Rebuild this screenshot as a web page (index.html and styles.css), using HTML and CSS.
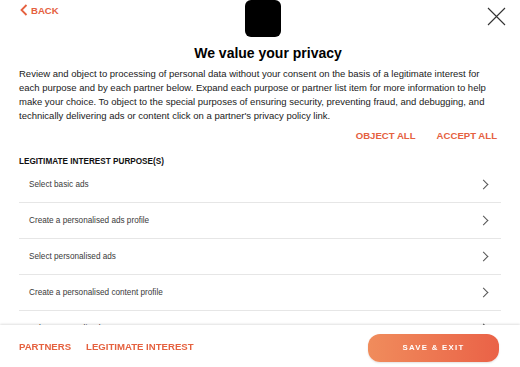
FILE: index.html
```html
<!DOCTYPE html>
<html lang="en">
<head>
    <meta charset="UTF-8">
    <title>Privacy - Legitimate Interest</title>
    <link rel="stylesheet" href="styles.css">
</head>
<body>
    <header class="header">
        <a class="back-link" href="#">
            <svg width="8" height="12" viewBox="0 0 8 12"><path d="M6.5 1 L1.5 6 L6.5 11" fill="none" stroke="#e5613f" stroke-width="1.8"/></svg>
            BACK
        </a>
        <div class="logo"></div>
        <button class="close-button" aria-label="Close">
            <svg width="19" height="19" viewBox="0 0 19 19"><path d="M1 1 L18 18 M18 1 L1 18" stroke="#333" stroke-width="1.1"/></svg>
        </button>
    </header>

    <h1 class="title">We value your privacy</h1>
    <p class="intro">Review and object to processing of personal data without your consent on the basis of a legitimate interest for each purpose and by each partner below. Expand each purpose or partner list item for more information to help make your choice. To object to the special purposes of ensuring security, preventing fraud, and debugging, and technically delivering ads or content click on a partner's privacy policy link.</p>

    <div class="bulk-actions">
        <a class="text-link" href="#">OBJECT ALL</a>
        <a class="text-link" href="#">ACCEPT ALL</a>
    </div>

    <h2 class="section-label">LEGITIMATE INTEREST PURPOSE(S)</h2>
    <ul class="purpose-list">
        <li class="purpose-item">Select basic ads <span class="chevron"></span></li>
        <li class="purpose-item">Create a personalised ads profile <span class="chevron"></span></li>
        <li class="purpose-item">Select personalised ads <span class="chevron"></span></li>
        <li class="purpose-item">Create a personalised content profile <span class="chevron"></span></li>
        <li class="purpose-item">Select personalised content <span class="chevron"></span></li>
    </ul>

    <footer class="footer">
        <div class="footer-links">
            <a class="text-link" href="#">PARTNERS</a>
            <a class="text-link" href="#">LEGITIMATE INTEREST</a>
        </div>
        <button class="save-button">SAVE &amp; EXIT</button>
    </footer>
</body>
</html>
```

FILE: styles.css
```css
body {
    font-family: "Liberation Sans", Arial, sans-serif;
    margin: 0;
    padding: 0 19px;
    background-color: #fff;
    color: #111;
    height: 367px;
    overflow: hidden;
}

.header {
    display: grid;
    grid-template-columns: 1fr auto 1fr;
    align-items: start;
    height: 37px;
}

.back-link {
    display: flex;
    align-items: center;
    gap: 3px;
    margin-top: 4px;
    margin-left: 1px;
    color: #e5613f;
    font-size: 9.6px;
    font-weight: bold;
    text-decoration: none;
}

.logo {
    width: 36px;
    height: 37px;
    margin-left: 6px;
    background-color: #000;
    border-radius: 6px;
}

.close-button {
    justify-self: end;
    margin-top: 7px;
    margin-right: -5px;
    padding: 0;
    border: none;
    background: none;
    line-height: 0;
}

.title {
    margin: 7px 0 0;
    padding-left: 16px;
    font-size: 14px;
    line-height: 18px;
    text-align: center;
    color: #000;
}

.intro {
    margin: 5px 0 0;
    font-size: 9.5px;
    line-height: 13.9px;
    color: #1a1a1a;
}

.bulk-actions {
    display: flex;
    justify-content: flex-end;
    gap: 21px;
    margin-top: 6px;
    padding-right: 4px;
    line-height: 14px;
}

.text-link {
    color: #e5613f;
    font-size: 9.6px;
    font-weight: bold;
    text-decoration: none;
}

.section-label {
    margin: 14px 0 0;
    font-size: 8.2px;
    line-height: 10px;
    color: #111;
}

.purpose-list {
    list-style: none;
    margin: 0;
    padding: 0;
}

.purpose-item {
    display: flex;
    align-items: center;
    justify-content: space-between;
    height: 35px;
    padding: 0 14px 0 10px;
    border-bottom: 1.5px solid #e6e6e6;
    font-size: 8.2px;
    color: #3a3a3a;
}

.chevron {
    width: 6px;
    height: 6px;
    border-top: 1.2px solid #555;
    border-right: 1.2px solid #555;
    transform: rotate(45deg);
}

.footer {
    position: fixed;
    left: 0;
    right: 0;
    bottom: 0;
    height: 42px;
    padding: 0 21px 0 19px;
    display: flex;
    align-items: center;
    justify-content: space-between;
    background-color: #fff;
    box-shadow: 0 -1px 2px rgba(0,0,0,0.12);
}

.footer-links {
    display: flex;
    gap: 15px;
    margin-top: 1px;
}

.save-button {
    width: 131px;
    height: 28px;
    margin-top: 3px;
    border: none;
    border-radius: 12px;
    background: linear-gradient(90deg, #f08c5c, #ea6247);
    color: #fff;
    font-family: inherit;
    font-size: 7.8px;
    font-weight: bold;
    letter-spacing: 1.3px;
    box-shadow: 0 1px 2px rgba(0,0,0,0.12);
}
```
